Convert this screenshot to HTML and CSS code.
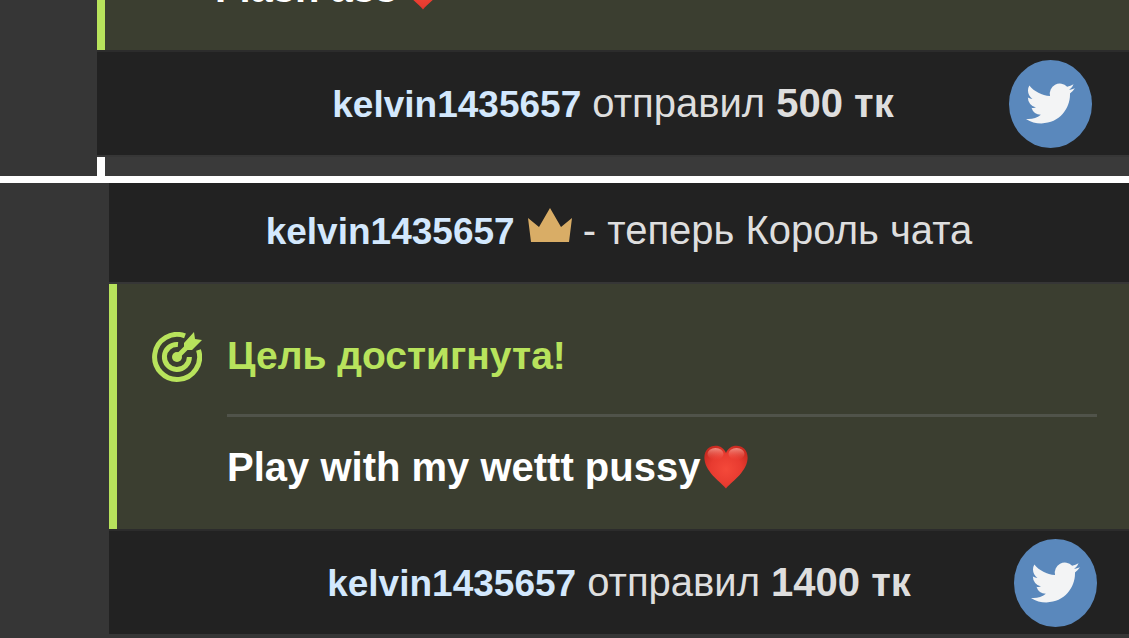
FILE: index.html
```
<!DOCTYPE html>
<html lang="ru">
<head>
<meta charset="utf-8">
<meta name="viewport" content="width=device-width, initial-scale=1">
<title>Чат</title>
<link rel="stylesheet" href="styles.css">
</head>
<body>
<svg class="defs" aria-hidden="true">
  <defs>
    <radialGradient id="heart-fill" cx="50%" cy="55%" r="60%">
      <stop offset="0" stop-color="#f4493a"/>
      <stop offset="0.6" stop-color="#e83b30"/>
      <stop offset="1" stop-color="#c92a20"/>
    </radialGradient>
    <linearGradient id="heart-shine" x1="0" y1="0" x2="0" y2="1">
      <stop offset="0" stop-color="#ffb9ac" stop-opacity="0.7"/>
      <stop offset="1" stop-color="#f4594a" stop-opacity="0"/>
    </linearGradient>
    <symbol id="heart" viewBox="0 0 44 44">
      <path fill="url(#heart-fill)" d="M22 43.500C18 38 2 28 .5 14.500C-.5 6 5 .8 11.500.8C16.500.8 20 3.500 22 8C24 3.500 27.500.8 32.500.8C39 .8 44.500 6 43.500 14.500C42 28 26 38 22 43.500Z"/>
      <ellipse cx="11.500" cy="9" rx="8" ry="6" fill="url(#heart-shine)"/>
      <ellipse cx="32.500" cy="9" rx="8" ry="6" fill="url(#heart-shine)"/>
    </symbol>
    <symbol id="bird" viewBox="0 0 24 24">
      <path d="M23.950 4.570a10 10 0 0 1-2.820.77 4.960 4.960 0 0 0 2.160-2.720c-.95.550-2 .950-3.130 1.180a4.920 4.920 0 0 0-8.380 4.480C7.690 8.090 4.070 6.130 1.640 3.160a4.820 4.820 0 0 0-.67 2.480c0 1.710.87 3.210 2.190 4.100a4.900 4.900 0 0 1-2.230-.62v.06a4.920 4.920 0 0 0 3.950 4.830 5 5 0 0 1-2.210.08 4.940 4.940 0 0 0 4.600 3.420A9.870 9.870 0 0 1 0 19.540a13.990 13.990 0 0 0 7.550 2.210c9.050 0 14-7.500 14-13.980 0-.21 0-.42-.02-.63a9.940 9.940 0 0 0 2.420-2.570z"/>
    </symbol>
  </defs>
</svg>

<main class="page">
  <section class="chat chat-first">
    <div class="messages">
      <article class="goal goal-end">
        <p class="goal-text">Flash ass<svg class="heart" role="img" aria-label="❤"><use href="#heart"/></svg></p>
      </article>
      <article class="notice">
        <p class="notice-text"><b class="name">kelvin1435657</b> отправил <b>500 тк</b></p>
        <button class="share" aria-label="Twitter"><svg class="bird"><use href="#bird"/></svg></button>
      </article>
      <article class="comment"></article>
    </div>
  </section>

  <section class="chat chat-second">
    <div class="messages">
      <article class="notice notice-king">
        <p class="notice-text"><b class="name">kelvin1435657</b> <svg class="crown" viewBox="0 0 44 34"><path d="M0 10L11 19L22 0L33 19L44 10L41 34H3Z"/></svg> - теперь Король чата</p>
      </article>
      <article class="goal">
        <header class="goal-head">
          <svg class="target" viewBox="0 0 50 50" aria-hidden="true">
            <g fill="none" stroke="currentColor" stroke-width="5">
              <path d="M33 3.900A22.500 22.500 0 1 0 46.500 18"/>
              <path d="M26 12.500A12.500 12.500 0 1 0 37.400 25"/>
              <path d="M25 25L37 13"/>
            </g>
            <circle cx="25" cy="25" r="5" fill="currentColor"/>
            <path fill="currentColor" d="M32 11L42 0L43 7L50 8L40 18L32 18Z"/>
          </svg>
          <h2 class="goal-title">Цель достигнута!</h2>
        </header>
        <p class="goal-text">Play with my wettt pussy<svg class="heart" role="img" aria-label="❤"><use href="#heart"/></svg></p>
      </article>
      <article class="notice">
        <p class="notice-text"><b class="name">kelvin1435657</b> отправил <b>1400 тк</b></p>
        <button class="share" aria-label="Twitter"><svg class="bird"><use href="#bird"/></svg></button>
      </article>
    </div>
  </section>
</main>
</body>
</html>
```
FILE: styles.css
```
* { box-sizing: border-box; }
body {
  margin: 0;
  background: #fff;
  color: #dedede;
  font-family: "Liberation Sans", Arial, sans-serif;
  font-size: 40px;
  line-height: 48px;
}
p, h2 { margin: 0; }
.defs { position: absolute; width: 0; height: 0; }
.page {
  display: flex;
  flex-direction: column;
  gap: 7px;
  height: 100vh;
  overflow: hidden;
}
.chat { background: #363636; }
.chat-first { padding-left: 97px; }
.chat-second { flex: 1; padding-left: 109px; }
.messages { display: flex; flex-direction: column; }
.notice {
  display: flex;
  align-items: center;
  justify-content: center;
  position: relative;
  min-height: 107px;
  padding: 7px 0;
  background: #222;
  border-top: 2px solid #2c2c2c;
  border-bottom: 2px solid #363636;
}
.notice-king { min-height: 101px; border-top: 0; padding: 0 0 3px; }
.name { color: #d3e8fd; font-size: 37px; }
.share {
  position: absolute;
  right: 37px;
  display: grid;
  place-items: center;
  width: 83px;
  height: 88px;
  padding: 0;
  border: 0;
  border-radius: 50%;
  background: #5a88bc;
}
.chat-second .share { right: 32px; }
.bird { width: 49px; height: 49px; fill: #f3f4f5; }
.crown { width: 44px; height: 34px; margin-left: 2px; vertical-align: 2px; fill: #d9ad66; }
.goal {
  padding: 48px 32px 38px 35px;
  background: #3b3e30;
  border-left: 8px solid #b8e35c;
  color: #fff;
  font-weight: 700;
}
.goal-head { display: flex; gap: 25px; }
.target { width: 50px; height: 50px; color: #b8e35c; }
.goal-title {
  flex: 1;
  padding-bottom: 34px;
  border-bottom: 3px solid #50534a;
  color: #b8e35c;
  font-size: 39px;
  line-height: 48px;
}
.goal-text { padding: 26px 0 0 75px; }
.heart { width: 44px; height: 44px; margin-left: 4px; vertical-align: -8px; }
.goal-end {
  display: flex;
  align-items: flex-end;
  height: 50px;
  padding-top: 0;
  overflow: hidden;
}
.comment {
  height: 19px;
  background: #3a3a3a;
  border-left: 8px solid #fff;
}
```
